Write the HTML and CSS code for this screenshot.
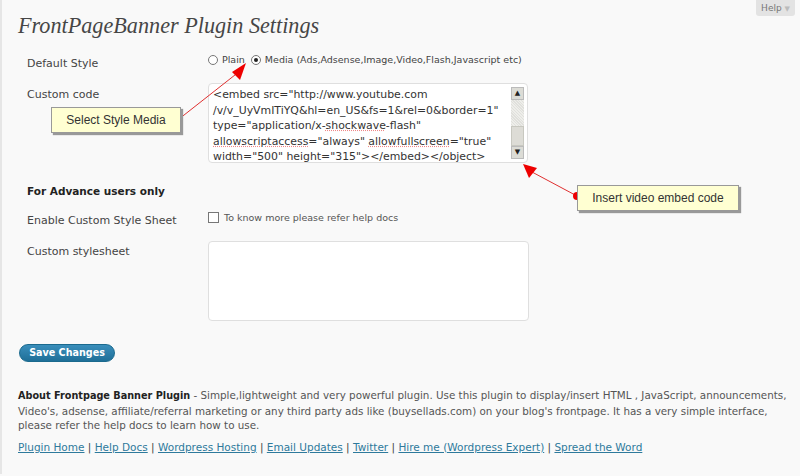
FILE: index.html
```html
<!DOCTYPE html>
<html lang="en">

<head>
    <meta charset="UTF-8">
    <meta name="viewport" content="width=device-width, initial-scale=1.0">
    <title>FrontPageBanner Plugin Settings</title>
    <link rel="stylesheet" href="styles.css">
</head>

<body>
    <div class="help-tab">Help <span class="help-arrow">&#9660;</span></div>

    <div class="wrap">
        <h2 class="page-title">FrontPageBanner Plugin Settings</h2>

        <form class="settings">
            <div class="row row--style">
                <div class="row__label">Default Style</div>
                <div class="row__field radios">
                    <label class="radio"><span class="radio__dot"></span>Plain</label>
                    <label class="radio"><span class="radio__dot radio__dot--on"></span>Media (Ads,Adsense,Image,Video,Flash,Javascript etc)</label>
                </div>
            </div>

            <div class="row row--code">
                <div class="row__label">Custom code</div>
                <div class="row__field">
                    <div class="codebox">
                        <div class="codebox__text">&lt;embed src="http://www.youtube.com<br>/v/v_UyVmITiYQ&amp;hl=en_US&amp;fs=1&amp;rel=0&amp;border=1"<br>type="application/x-<span class="typo">shockwave</span>-flash"<br><span class="typo">allowscriptaccess</span>="always" <span class="typo">allowfullscreen</span>="true"<br>width="500" height="315"&gt;&lt;/embed&gt;&lt;/object&gt;</div>
                        <div class="scrollbar">
                            <span class="scrollbar__btn">&#9650;</span>
                            <span class="scrollbar__track"></span>
                            <span class="scrollbar__thumb"></span>
                            <span class="scrollbar__btn">&#9660;</span>
                        </div>
                    </div>
                </div>
            </div>

            <h3 class="section-title">For Advance users only</h3>

            <div class="row row--check">
                <div class="row__label">Enable Custom Style Sheet</div>
                <div class="row__field">
                    <label class="check"><span class="check__box"></span>To know more please refer help docs</label>
                </div>
            </div>

            <div class="row row--css">
                <div class="row__label">Custom stylesheet</div>
                <div class="row__field">
                    <div class="cssbox"></div>
                </div>
            </div>

            <button type="button" class="button-primary">Save Changes</button>
        </form>

        <p class="about"><b>About Frontpage Banner Plugin</b> - Simple,lightweight and very powerful plugin. Use this plugin to display/insert HTML , JavaScript, announcements, Video's, adsense, affiliate/referral marketing or any third party ads like (buysellads.com) on your blog's frontpage. It has a very simple interface, please refer the help docs to learn how to use.</p>

        <p class="links">
            <a href="#">Plugin Home</a> | <a href="#">Help Docs</a> | <a href="#">Wordpress Hosting</a> | <a href="#">Email Updates</a> | <a href="#">Twitter</a> | <a href="#">Hire me (Wordpress Expert)</a> | <a href="#">Spread the Word</a>
        </p>
    </div>

    <!-- annotation callouts drawn over the page -->
    <svg class="arrows" width="800" height="476" viewBox="0 0 800 476">
        <line x1="179" y1="119" x2="240" y2="71" stroke="#e03030" stroke-width="1"/>
        <polygon points="246,63 232,72 240,80" fill="#ee0000"/>
        <circle cx="179" cy="119" r="4" fill="#ee0000"/>
        <line x1="577" y1="196" x2="532" y2="172" stroke="#e03030" stroke-width="1"/>
        <polygon points="523,164 529,178 537,168" fill="#ee0000"/>
        <circle cx="577" cy="196" r="4" fill="#ee0000"/>
    </svg>
    <div class="callout callout--style">Select Style Media</div>
    <div class="callout callout--embed">Insert video embed code</div>
</body>

</html>
```

FILE: styles.css
```css
body {
    margin: 0;
    background: #f9f9f9;
    color: #333;
    font-family: "DejaVu Sans", Verdana, sans-serif;
    font-size: 11px;
    border-left: 2px solid #e6e6e6;
    height: 474px;
    overflow: hidden;
}

.help-tab {
    position: absolute;
    top: 0;
    right: 5px;
    width: 39px;
    height: 16px;
    background: #e3e3e3;
    border-radius: 0 0 3px 3px;
    color: #777;
    font-size: 9px;
    line-height: 16px;
    text-align: center;
}

.help-arrow {
    color: #bbb;
    font-size: 7px;
}

.wrap {
    padding-left: 16px;
}

.page-title {
    margin: 0;
    padding-top: 10px;
    height: 30px;
    font-family: "Liberation Serif", "Times New Roman", serif;
    font-style: italic;
    font-weight: normal;
    font-size: 22.2px;
    line-height: 32px;
    color: #464646;
}

.settings {
    margin-top: 10px;
}

.row {
    display: grid;
    grid-template-columns: 190px 1fr;
}

.row__label {
    padding-left: 9px;
    color: #444;
    line-height: 14px;
}

.row--style {
    height: 33px;
}

.row--style .row__label {
    padding-top: 7px;
}

.radios {
    display: flex;
    align-items: flex-start;
    gap: 6px;
    padding-top: 4px;
    font-size: 9.5px;
    color: #444;
}

.radio {
    display: flex;
    align-items: center;
    gap: 4px;
}

.radio__dot {
    width: 8px;
    height: 8px;
    border: 1px solid #777;
    border-radius: 50%;
    background: #fff;
    position: relative;
}

.radio__dot--on::after {
    content: "";
    position: absolute;
    left: 2px;
    top: 2px;
    width: 4px;
    height: 4px;
    border-radius: 50%;
    background: #222;
}

.row--code .row__label {
    padding-top: 5px;
}

.codebox {
    display: flex;
    width: 318px;
    height: 78px;
    border: 1px solid #dfdfdf;
    border-radius: 4px;
    background: #fff;
}

.codebox__text {
    flex: 1;
    padding: 3px 0 0 4px;
    font-size: 10.9px;
    line-height: 15.5px;
    color: #333;
    white-space: nowrap;
    overflow: hidden;
}

.typo {
    text-decoration: underline dotted #e88;
}

.scrollbar {
    display: flex;
    flex-direction: column;
    width: 13px;
    margin: 3px 3px 3px 0;
    background: #e8e8e4;
}

.scrollbar__btn {
    height: 13px;
    background: #dcdcd6;
    border: 1px solid #bbb;
    box-sizing: border-box;
    font-size: 7px;
    line-height: 11px;
    text-align: center;
    color: #222;
}

.scrollbar__track {
    flex: 1;
    background: repeating-linear-gradient(45deg, #eeeeea 0 1px, #e0e0dc 1px 2px);
}

.scrollbar__thumb {
    height: 20px;
    background: #dddcd6;
    border: 1px solid #c8c8c0;
    box-sizing: border-box;
}

.section-title {
    margin: 16px 0 0 9px;
    height: 31px;
    font-size: 10.5px;
    line-height: 24px;
    color: #222;
}

.row--check {
    height: 31px;
}

.row--check .row__label {
    padding-top: 4px;
}

.check {
    display: flex;
    align-items: center;
    gap: 5px;
    padding-top: 2px;
    font-size: 9.5px;
    color: #555;
}

.check__box {
    width: 9px;
    height: 9px;
    border: 1px solid #777;
    background: #fff;
}

.row--css .row__label {
    padding-top: 4px;
}

.cssbox {
    width: 319px;
    height: 78px;
    border: 1px solid #dfdfdf;
    border-radius: 4px;
    background: #fff;
}

.button-primary {
    display: block;
    margin: 23px 0 0 1px;
    width: 96px;
    height: 18px;
    padding: 0;
    border: 1px solid #1b6a8e;
    border-radius: 10px;
    background: linear-gradient(#3a8ebb, #1f6f98);
    color: #fff;
    font-family: "DejaVu Sans", Verdana, sans-serif;
    font-size: 9.6px;
    font-weight: bold;
    line-height: 16px;
}

.about {
    margin: 26px 0 0;
    width: 778px;
    font-size: 10.35px;
    color: #555;
    line-height: 14.5px;
}

.about b {
    font-size: 9.7px;
    color: #222;
}

.links {
    margin: 8px 0 0;
    font-size: 10.5px;
    color: #444;
}

.links a {
    color: #2e7a9c;
}

.arrows {
    position: absolute;
    left: 0;
    top: 0;
    pointer-events: none;
}

.callout {
    position: absolute;
    height: 24px;
    background: #ffffd2;
    border: 1px solid #999;
    box-shadow: 2px 2px 1px #999;
    font-family: "Liberation Sans", Arial, sans-serif;
    font-size: 12px;
    line-height: 24px;
    color: #333;
    text-align: center;
}

.callout--style {
    left: 51px;
    top: 107px;
    width: 128px;
}

.callout--embed {
    left: 577px;
    top: 185px;
    width: 160px;
}

.arrows,
.callout {
    z-index: 2;
}
```
